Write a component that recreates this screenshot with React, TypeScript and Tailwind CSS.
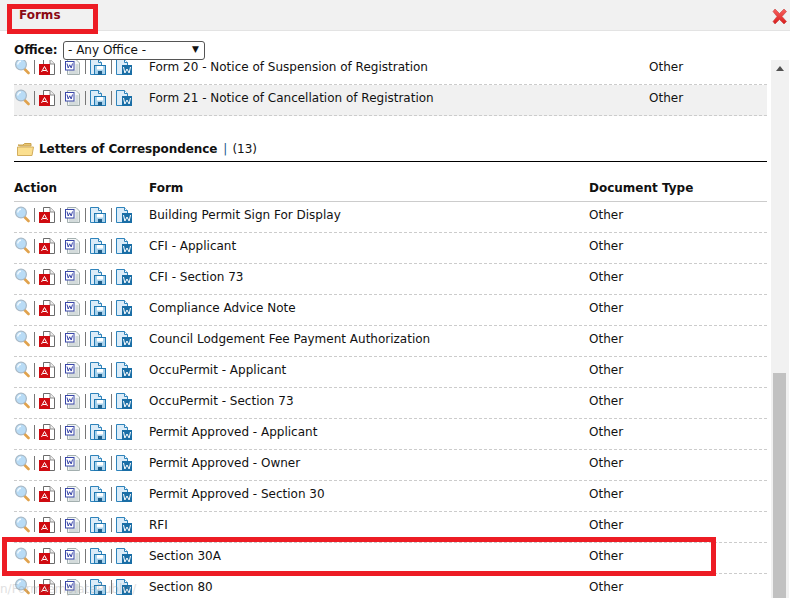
import React from 'react';

const letters = [
  'Building Permit Sign For Display',
  'CFI - Applicant',
  'CFI - Section 73',
  'Compliance Advice Note',
  'Council Lodgement Fee Payment Authorization',
  'OccuPermit - Applicant',
  'OccuPermit - Section 73',
  'Permit Approved - Applicant',
  'Permit Approved - Owner',
  'Permit Approved - Section 30',
  'RFI',
  'Section 30A',
  'Section 80',
];

const Magnifier = () => (
  <svg width="16" height="17" viewBox="0 0 16 17" className="shrink-0">
    <path d="M10.500 11l4 4" stroke="#e0a24c" strokeWidth="2.6" strokeLinecap="round" />
    <circle cx="7" cy="6.500" r="5.400" fill="#b9dcf6" stroke="#a9b9c6" strokeWidth="1.200" />
    <path d="M3.800 6.500a3.200 3.200 0 0 1 3.200-3.200" stroke="#f4fbff" strokeWidth="1.400" fill="none" />
  </svg>
);

const Pdf = () => (
  <svg width="16" height="16" viewBox="0 0 16 16" className="shrink-0">
    <path d="M4.500.5h6.500l4.500 4.500v10.500h-11z" fill="#fff" stroke="#6b6b6b" />
    <path d="M11 .5v4.500h4.500" fill="#eee" stroke="#8a8a8a" />
    <rect x="0" y="5" width="11" height="11" fill="#cf0a10" />
    <path d="M2.500 13L5.500 7.500l3 5.500M4 11.500h3" stroke="#fff" strokeWidth="1" fill="none" />
  </svg>
);

const WordDoc = () => (
  <svg width="16" height="16" viewBox="0 0 16 16" className="shrink-0">
    <path d="M2.500.5h8.500l3.500 3.500v11.500h-12z" fill="#f3f6f6" stroke="#a3afaf" />
    <path d="M10.500 6h3M10.500 8h3M10.500 10h3M4 12h9.500M4 14h9.500" stroke="#b4c0c0" />
    <rect x="0.500" y="2.500" width="8.500" height="8.500" fill="#fff" stroke="#3946a8" />
    <path d="M2 4.500l1.200 4.500 1.500-3.200 1.500 3.200 1.300-4.500" stroke="#3946a8" fill="none" />
  </svg>
);

const SaveBase = ({ children }: { children: React.ReactNode }) => (
  <svg width="16" height="16" viewBox="0 0 16 16" className="shrink-0">
    <path d="M.5.5h8l3 3v12H.5z" fill="#dcecf8" stroke="#2e83bb" />
    <path d="M8.500.5v3h3" fill="#fff" stroke="#2e83bb" />
    {children}
  </svg>
);

const SaveDisk = () => (
  <SaveBase>
    <rect x="4.500" y="6.500" width="11" height="9" fill="#a9d2ec" stroke="#1f78b2" />
    <rect x="7" y="7" width="6" height="3.500" fill="#fff" />
    <rect x="8" y="12" width="4" height="3.500" fill="#1d5f8d" />
  </SaveBase>
);

const SaveWord = () => (
  <SaveBase>
    <rect x="6" y="6" width="10" height="10" fill="#1a6ea6" />
    <path d="M7.500 8l1.400 6 2.100-4 2.100 4 1.400-6" stroke="#fff" strokeWidth="1" fill="none" />
  </SaveBase>
);

const Actions = () => (
  <div className="w-[135px] shrink-0 flex items-center -mt-px">
    <Magnifier />
    <span className="w-px h-[14px] bg-[#777] shrink-0 ml-1 mr-1" />
    <Pdf />
    <span className="w-px h-[14px] bg-[#777] shrink-0 ml-[5px] mr-1" />
    <WordDoc />
    <span className="w-px h-[14px] bg-[#777] shrink-0 ml-1 mr-1" />
    <SaveDisk />
    <span className="w-px h-[14px] bg-[#777] shrink-0 ml-[5px] mr-1" />
    <SaveWord />
  </div>
);

const Row = ({ name, colWidth, shaded }: { name: string; colWidth: string; shaded?: boolean }) => (
  <div className={`h-[31px] flex items-center pb-1 border-b border-dashed border-[#ccc] ${shaded ? 'bg-[#f1f1f1]' : ''}`}>
    <Actions />
    <div className={colWidth}>{name}</div>
    <div>Other</div>
  </div>
);

export default function App() {
  return (
    <div
      className="relative w-[790px] h-[598px] overflow-hidden bg-white text-[12px] text-[#111] flex flex-col"
      style={{ fontFamily: '"DejaVu Sans", Verdana, sans-serif' }}
    >
      <div className="h-[31px] shrink-0 bg-[#f1f1f1] border-b border-[#e3e3e3] flex justify-between pl-[19px] pr-[1px]">
        <span className="font-bold text-[#8b0a14] mt-[7px] leading-[16px]">Forms</span>
        <svg width="19" height="19" viewBox="0 0 19 19" className="mt-[7px]">
          <defs>
            <linearGradient id="x" x1="0" y1="0" x2="0" y2="1">
              <stop offset="0" stopColor="#f9625f" />
              <stop offset="1" stopColor="#d81c1c" />
            </linearGradient>
          </defs>
          <path d="M3 4.500L7 9.500 3 14.500 5 17 9.500 12.500 14 17 16.500 14.500 12 9.500 16.500 4.500 14 2 9.500 6.500 5 2z" fill="url(#x)" stroke="#c4423f" strokeWidth="0.6" />
        </svg>
      </div>

      <div className="h-[29px] shrink-0 flex items-center pl-[14px] pt-[9px]">
        <span className="font-bold w-[49px]">Office:</span>
        <div className="w-[142px] h-[19px] border border-[#555] rounded-[3px] flex items-center justify-between pl-[4px] pr-[5px] bg-white">
          <span>- Any Office -</span>
          <span className="text-[9px]">▼</span>
        </div>
      </div>

      <div className="flex-1 flex overflow-hidden">
        <div className="flex-1 pl-[14px] pr-[4px] overflow-hidden">
          <div className="-mt-[6px]">
            <Row name="Form 20 - Notice of Suspension of Registration" colWidth="w-[500px]" />
            <Row name="Form 21 - Notice of Cancellation of Registration" colWidth="w-[500px]" shaded />
          </div>
          <div className="h-[46px] flex items-end pb-[3px] border-b border-black">
            <svg width="18" height="15" viewBox="0 0 18 15" className="ml-[3px] mr-[4px] mb-px">
              <path d="M1 3h5l1.500-1.500H14V4H3z" fill="#e8c46f" stroke="#c9a24e" />
              <path d="M.5 13.500V5h16l-1.500 8.500z" fill="#fbdf8f" stroke="#d3ae5e" />
            </svg>
            <span className="font-bold tracking-[-0.08px]">Letters of Correspondence</span>
            <span className="ml-[6px] text-[#1a5a8a]">|</span>
            <span className="ml-[5px]">(13)</span>
          </div>
          <div className="h-[40px] flex items-end pb-1 font-bold border-b border-[#ccc]">
            <div className="w-[135px]">Action</div>
            <div className="w-[440px]">Form</div>
            <div>Document Type</div>
          </div>
          {letters.map((name) => (
            <Row key={name} name={name} colWidth="w-[440px]" />
          ))}
        </div>
        <div className="w-[18px] shrink-0 mr-[1px] bg-[#f1f1f1] relative">
          <div className="mx-auto mt-[6px] w-0 h-0 border-x-[4px] border-x-transparent border-b-[5px] border-b-[#505050]" />
          <div className="absolute left-[2px] top-[313px] w-[13px] h-[300px] bg-[#c1c1c1]" />
        </div>
      </div>

      {/* annotation boxes drawn over the page */}
      <div className="absolute left-[7px] top-[4px] w-[91px] h-[30px] border-[5px] border-[#ed1c24]" />
      <div className="absolute left-[2px] top-[537px] w-[714px] h-[39px] border-[5px] border-[#ed1c24]" />
      <div className="absolute left-0 top-[580px] text-[#999] opacity-30">n/FormTemplatePublic/</div>
    </div>
  );
}
